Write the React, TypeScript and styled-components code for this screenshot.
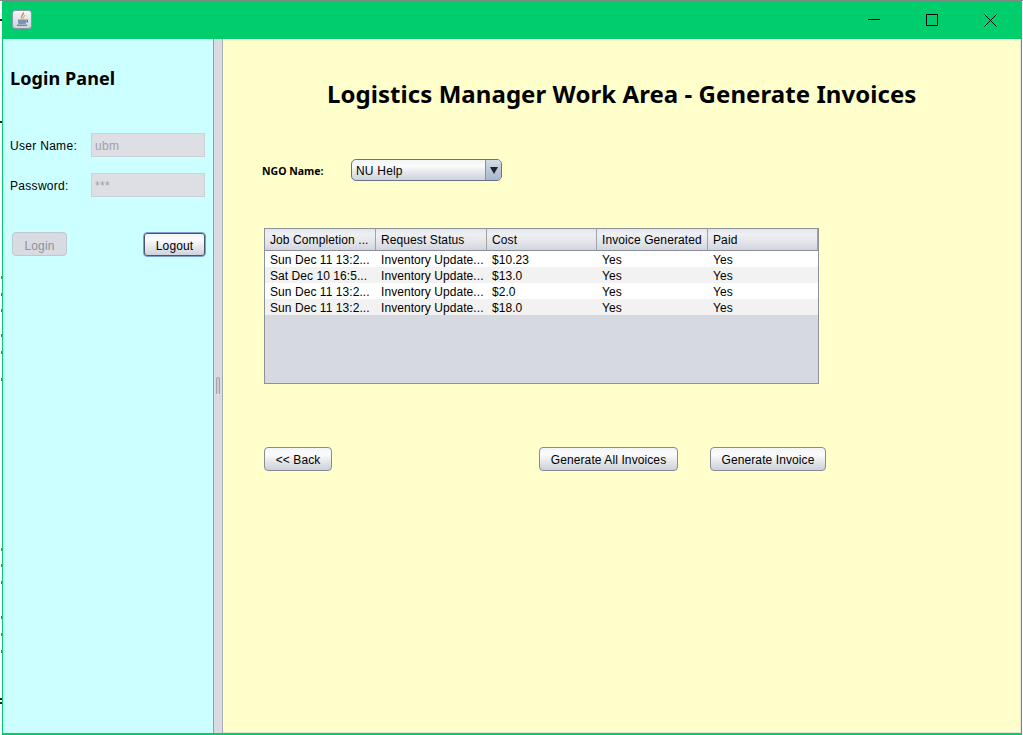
import React from "react"
import styled, { createGlobalStyle } from "styled-components"

const GlobalStyle = createGlobalStyle`
  html, body {
    margin: 0;
    padding: 0;
    background: #fff;
  }
  body {
    font-family: "Liberation Sans", Arial, sans-serif;
    font-size: 12px;
    color: #000;
  }
`

const Screen = styled.div`
  position: relative;
  width: 1023px;
  height: 735px;
  box-sizing: border-box;
  padding-left: 2px;
  padding-right: 1px;
  border-top: 1px solid #7f8a84;
  overflow: hidden;
`

// bits of the window behind that stick out on the left edge
const Tick = styled.div<{ $top: number; $dark?: boolean }>`
  position: absolute;
  left: ${(p) => (p.$dark ? 0 : 1)}px;
  top: ${(p) => p.$top}px;
  width: ${(p) => (p.$dark ? 2 : 1)}px;
  height: ${(p) => (p.$dark ? 2 : 3)}px;
  background: ${(p) => (p.$dark ? "#222" : "#6e6e6e")};
`

const Frame = styled.div`
  height: 734px;
  box-sizing: border-box;
  display: flex;
  flex-direction: column;
  border: 1px solid #00ce6c;
  border-top: 0;
  border-bottom-width: 2px;
`

const TitleBar = styled.div`
  height: 38px;
  flex: none;
  display: flex;
  align-items: center;
  background: #00ce6c;
`

const AppIcon = styled.div`
  width: 20px;
  height: 19px;
  margin: -1px 0 0 9px;
  box-sizing: border-box;
  display: flex;
  align-items: center;
  justify-content: center;
  background: linear-gradient(#f4f5f7, #cdd3dc);
  border: 1px solid #8b98a8;
  border-radius: 3px;
`

const WinButtons = styled.div`
  margin-left: auto;
  margin-right: 1px;
  display: flex;
  height: 100%;
`

const WinButton = styled.div`
  width: 58.5px;
  display: flex;
  align-items: center;
  justify-content: center;
`

const Split = styled.div`
  flex: 1;
  display: flex;
  min-height: 0;
`

const LeftPane = styled.div`
  width: 210px;
  flex: none;
  box-sizing: border-box;
  padding: 28px 8px 0 7px;
  background: #ccffff;
`

const PanelTitle = styled.h2`
  margin: 0 0 44px;
  font: bold 18px/22px Tahoma, "Noto Sans", sans-serif;
  letter-spacing: 0.1px;
`

const FieldRow = styled.div`
  display: flex;
  align-items: center;
  height: 24px;
  margin-bottom: 16px;
`

const FieldLabel = styled.span`
  width: 81px;
  flex: none;
  padding-top: 2px;
  letter-spacing: 0.3px;
`

const Field = styled.div`
  flex: 1;
  height: 24px;
  box-sizing: border-box;
  padding: 1px 3px 0;
  line-height: 22px;
  color: #a0a1a9;
  background: #dddfe4;
  border: 1px solid #cdd0d6;
  letter-spacing: 0.3px;
`

const LoginActions = styled.div`
  display: flex;
  justify-content: space-between;
  padding: 19px 0 0 2px;
  margin-right: -1px;
`

const Button = styled.button<{ $width: number; $offset?: number; $state?: "disabled" | "focus" }>`
  width: ${(p) => p.$width}px;
  height: ${(p) => (p.$state === "focus" ? 25 : 24)}px;
  margin-left: ${(p) => p.$offset ?? 0}px;
  padding: ${(p) => (p.$state === "disabled" ? 4 : 2)}px 0 0;
  font: 12px "Liberation Sans", Arial, sans-serif;
  letter-spacing: 0.1px;
  color: ${(p) => (p.$state === "disabled" ? "#8e929a" : "#000")};
  border-radius: 4px;
  border: 1px solid ${(p) => (p.$state === "disabled" ? "#c2c6cd" : p.$state === "focus" ? "#7ea0cc" : "#868b94")};
  box-shadow: ${(p) => (p.$state === "focus" ? "inset 0 0 0 1px #4a5568" : "none")};
  background: ${(p) =>
    p.$state === "disabled"
      ? "#d8dbe1"
      : "linear-gradient(#f4f5f7 0%, #fbfbfc 30%, #e6e8ed 60%, #ccd0d9 100%)"};
`

const Divider = styled.div`
  width: 10px;
  flex: none;
  box-sizing: border-box;
  display: flex;
  align-items: center;
  justify-content: center;
  background: #d9dbe2;
  border-left: 1px solid #9a9ea8;
  border-right: 1px solid #a8acb5;
`

const Grip = styled.div`
  width: 4px;
  height: 18px;
  margin-top: -1px;
  box-sizing: border-box;
  border: 1px solid #a4a7b0;
  border-bottom-color: #f2f3f5;
  border-radius: 2px;
  background: #c9ccd3;
`

const RightPane = styled.div`
  flex: 1;
  min-width: 0;
  box-sizing: border-box;
  padding: 39px 0 0 41px;
  background: #ffffcc;
  border-right: 1px solid #e4e6d4;
  border-bottom: 1px solid #e4e6d4;
`

const PageTitle = styled.h1`
  margin: 0 0 0 63px;
  font: bold 24px/32px Tahoma, "Noto Sans", sans-serif;
  letter-spacing: 0.06px;
`

const NgoRow = styled.div`
  display: flex;
  align-items: center;
  margin: 49px 0 0 -2px;
  height: 22px;
`

const NgoLabel = styled.span`
  width: 89px;
  flex: none;
  padding-top: 2px;
  font: bold 10.5px Tahoma, "Noto Sans", sans-serif;
`

const Combo = styled.div`
  width: 151px;
  height: 22px;
  box-sizing: border-box;
  display: flex;
  border: 1px solid #687283;
  border-radius: 5px;
  overflow: hidden;
  background: linear-gradient(#f3f4f6, #fbfbfc 30%, #dfe2e8 70%, #cfd3da);
`

const ComboText = styled.span`
  flex: 1;
  padding: 1px 0 0 4px;
  line-height: 20px;
  letter-spacing: 0.2px;
`

const ComboArrow = styled.div`
  width: 15px;
  display: flex;
  align-items: center;
  justify-content: center;
  border-left: 1px solid #8792a3;
  background: linear-gradient(#d3dbe6, #a9b7c9);
`

const TableBox = styled.div`
  width: 555px;
  height: 156px;
  margin-top: 47px;
  box-sizing: border-box;
  border: 1px solid #8d9199;
  background: #d6d9e0;
`

const HeaderRow = styled.div`
  display: flex;
  height: 22px;
  box-sizing: border-box;
  border-bottom: 1px solid #8a8f9b;
  background: linear-gradient(#e3e5e9, #eff0f3 25%, #e2e4e9 65%, #d2d5dc);
`

const HeaderCell = styled.div<{ $width: number }>`
  width: ${(p) => p.$width}px;
  flex: none;
  box-sizing: border-box;
  padding: 1px 0 0 5px;
  line-height: 20px;
  letter-spacing: 0.1px;
  border-right: 1px solid #9da2ad;
`

const Row = styled.div<{ $odd: boolean }>`
  display: flex;
  height: 16px;
  line-height: 16px;
  background: ${(p) => (p.$odd ? "#f2f2f2" : "#fff")};
`

const Cell = styled.div<{ $width: number }>`
  width: ${(p) => p.$width}px;
  flex: none;
  box-sizing: border-box;
  padding: 1px 0 0 5px;
  white-space: nowrap;
  overflow: hidden;
  letter-spacing: 0.06px;
`

const ActionRow = styled.div`
  display: flex;
  margin-top: 63px;
`

const columnWidths = [111, 111, 110, 111, 110]

const columns = ["Job Completion ...", "Request Status", "Cost", "Invoice Generated", "Paid"]

const rows = [
  ["Sun Dec 11 13:2...", "Inventory Update...", "$10.23", "Yes", "Yes"],
  ["Sat Dec 10 16:5...", "Inventory Update...", "$13.0", "Yes", "Yes"],
  ["Sun Dec 11 13:2...", "Inventory Update...", "$2.0", "Yes", "Yes"],
  ["Sun Dec 11 13:2...", "Inventory Update...", "$18.0", "Yes", "Yes"],
]

const greyTicks = [275, 292, 308, 333, 350, 377, 547, 563, 580, 615, 632, 649]
const darkTicks = [18, 120, 697, 701]

const JavaIcon = () => (
  <svg width="15" height="15" viewBox="0 0 15 15" fill="none">
    <path d="M8.5 0.5C9.5 2.5 6 3.5 7 6.5C5.5 4.5 7.5 2.5 8.5 0.5Z" fill="#e8762d" stroke="#e8762d" strokeWidth="0.7" />
    <path d="M10 3C9.5 4.5 8 5 8.5 6.5" stroke="#f09a50" strokeWidth="1" />
    <path d="M3 7.5H11V10.5C11 11.5 10 12 9 12H5C4 12 3 11.5 3 10.5Z" fill="#7d93ad" />
    <path d="M11 8H12.5V10H11" stroke="#5a7592" strokeWidth="1" />
    <path d="M2 13.2H12" stroke="#5a7592" strokeWidth="1.2" />
  </svg>
)

export default function App() {
  return (
    <>
      <GlobalStyle />
      <Screen>
        {greyTicks.map((y) => (
          <Tick key={y} $top={y} />
        ))}
        {darkTicks.map((y) => (
          <Tick key={y} $top={y} $dark />
        ))}
        <Frame>
          <TitleBar>
            <AppIcon>
              <JavaIcon />
            </AppIcon>
            <WinButtons>
              <WinButton>
                <svg width="12" height="12" viewBox="0 0 12 12">
                  <path d="M0 5.5H12" stroke="#000" strokeWidth="1" />
                </svg>
              </WinButton>
              <WinButton>
                <svg width="12" height="12" viewBox="0 0 12 12" fill="none">
                  <rect x="0.5" y="0.5" width="11" height="11" stroke="#000" strokeWidth="1" />
                </svg>
              </WinButton>
              <WinButton>
                <svg width="13" height="13" viewBox="0 0 13 13">
                  <path d="M0.5 0.5L12.5 12.5M12.5 0.5L0.5 12.5" stroke="#000" strokeWidth="1" />
                </svg>
              </WinButton>
            </WinButtons>
          </TitleBar>
          <Split>
            <LeftPane>
              <PanelTitle>Login Panel</PanelTitle>
              <FieldRow>
                <FieldLabel>User Name:</FieldLabel>
                <Field>ubm</Field>
              </FieldRow>
              <FieldRow>
                <FieldLabel>Password:</FieldLabel>
                <Field>***</Field>
              </FieldRow>
              <LoginActions>
                <Button $width={55} $state="disabled">Login</Button>
                <Button $width={63} $state="focus">Logout</Button>
              </LoginActions>
            </LeftPane>
            <Divider>
              <Grip />
            </Divider>
            <RightPane>
              <PageTitle>Logistics Manager Work Area - Generate Invoices</PageTitle>
              <NgoRow>
                <NgoLabel>NGO Name:</NgoLabel>
                <Combo>
                  <ComboText>NU Help</ComboText>
                  <ComboArrow>
                    <svg width="8" height="7" viewBox="0 0 8 7">
                      <path d="M0 0H8L4 7Z" fill="#1c2430" />
                    </svg>
                  </ComboArrow>
                </Combo>
              </NgoRow>
              <TableBox>
                <HeaderRow>
                  {columns.map((c, i) => (
                    <HeaderCell key={c} $width={columnWidths[i]}>{c}</HeaderCell>
                  ))}
                </HeaderRow>
                {rows.map((r, i) => (
                  <Row key={i} $odd={i % 2 === 1}>
                    {r.map((v, j) => (
                      <Cell key={j} $width={columnWidths[j]}>{v}</Cell>
                    ))}
                  </Row>
                ))}
              </TableBox>
              <ActionRow>
                <Button $width={68}>&lt;&lt; Back</Button>
                <Button $width={139} $offset={207}>Generate All Invoices</Button>
                <Button $width={116} $offset={32}>Generate Invoice</Button>
              </ActionRow>
            </RightPane>
          </Split>
        </Frame>
      </Screen>
    </>
  )
}
